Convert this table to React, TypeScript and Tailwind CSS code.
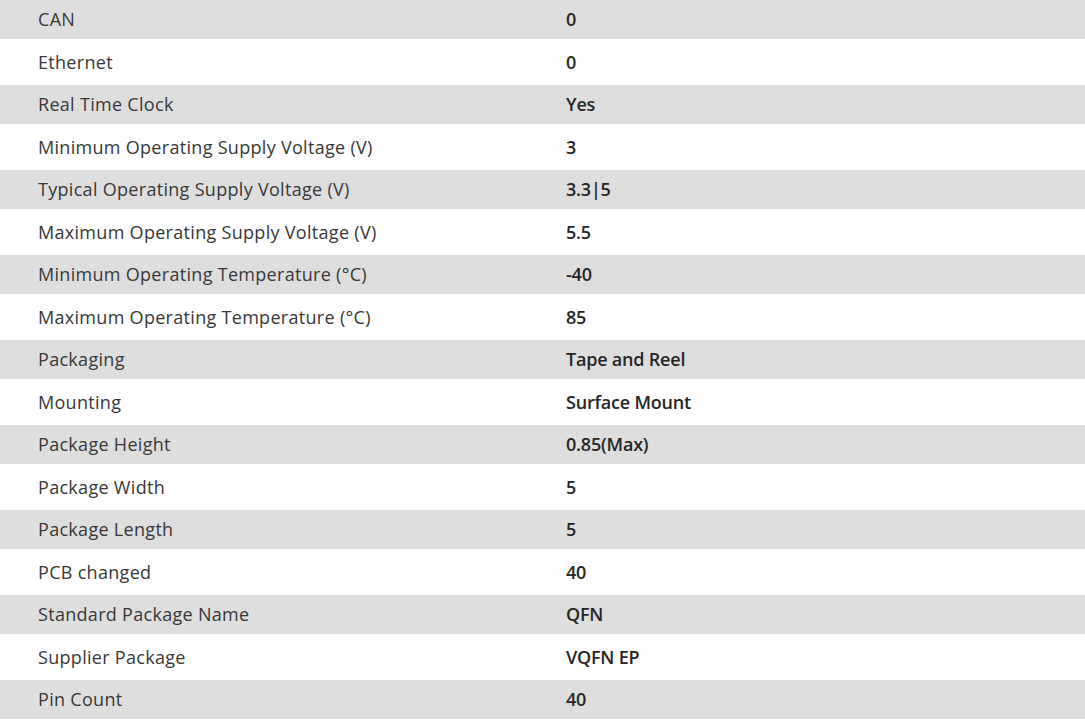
import React from "react";

const rows: [string, string][] = [
  ["CAN", "0"],
  ["Ethernet", "0"],
  ["Real Time Clock", "Yes"],
  ["Minimum Operating Supply Voltage (V)", "3"],
  ["Typical Operating Supply Voltage (V)", "3.3|5"],
  ["Maximum Operating Supply Voltage (V)", "5.5"],
  ["Minimum Operating Temperature (°C)", "-40"],
  ["Maximum Operating Temperature (°C)", "85"],
  ["Packaging", "Tape and Reel"],
  ["Mounting", "Surface Mount"],
  ["Package Height", "0.85(Max)"],
  ["Package Width", "5"],
  ["Package Length", "5"],
  ["PCB changed", "40"],
  ["Standard Package Name", "QFN"],
  ["Supplier Package", "VQFN EP"],
  ["Pin Count", "40"],
];

export default function App() {
  return (
    <div className="w-[1085px] h-[720px] overflow-hidden bg-white" style={{ fontFamily: '"Open Sans", "Noto Sans", sans-serif' }}>
      {rows.map(([k, v], i) => (
        <div
          key={k}
          className={`grid grid-cols-[566px_1fr] items-center ${i % 2 === 0 ? "h-[39px] bg-[#dedede]" : "h-[46px] bg-white"}`}
        >
          <div className="pl-[38px] text-[18px] text-[#383838] tracking-[0.3px]">{k}</div>
          <div className="text-[18px] font-semibold text-[#262626] tracking-[-0.2px]">{v}</div>
        </div>
      ))}
    </div>
  );
}
